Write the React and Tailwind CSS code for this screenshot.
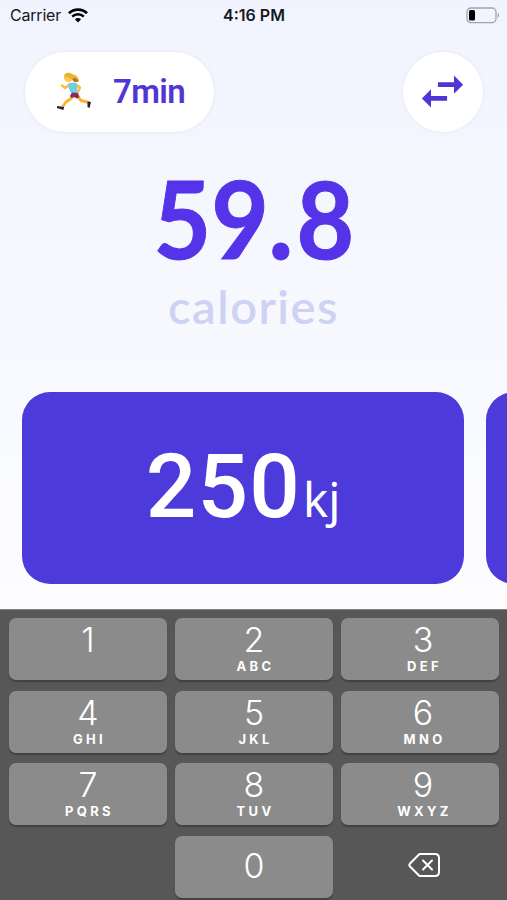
import React, { useState } from 'react';
import { MdSwapHoriz } from 'react-icons/md';

const keys = [
  { digit: '1', letters: '' },
  { digit: '2', letters: 'ABC' },
  { digit: '3', letters: 'DEF' },
  { digit: '4', letters: 'GHI' },
  { digit: '5', letters: 'JKL' },
  { digit: '6', letters: 'MNO' },
  { digit: '7', letters: 'PQRS' },
  { digit: '8', letters: 'TUV' },
  { digit: '9', letters: 'WXYZ' },
];

const WifiIcon = () => (
  <svg width="20" height="15" viewBox="0 0 20 15" fill="none">
    <path d="M1 5.2C6 .4 14 .4 19 5.2" stroke="#000" strokeWidth="2.7" />
    <path d="M4.2 8.6C7.4 5.5 12.6 5.5 15.8 8.6" stroke="#000" strokeWidth="2.5" />
    <path d="M6.9 11.2c1.8-1.7 4.4-1.7 6.2 0L10 14.4z" fill="#000" />
  </svg>
);

const BatteryIcon = () => (
  <svg width="34" height="17" viewBox="0 0 34 17" fill="none">
    <rect x="1" y="1" width="29" height="14.6" rx="4" stroke="#a3a4ab" strokeWidth="1.3" />
    <rect x="3" y="3" width="6" height="10.6" rx="1.6" fill="#000" />
    <path d="M31.6 5.8c2 .8 2 4.2 0 5z" fill="#a3a4ab" />
  </svg>
);

const Runner = () => (
  <svg width="36" height="40" viewBox="0 0 36 40" fill="none">
    <path d="M17 24C15 28 12 28 10 30L6.5 35" stroke="#f8b52f" strokeWidth="3" strokeLinejoin="round" />
    <path d="M21 24l4 4.500 8 2" stroke="#f8b52f" strokeWidth="3" strokeLinejoin="round" />
    <path d="M13.500 12.500l-4.500 3.500L6 13.500" stroke="#fbbd39" strokeWidth="2.400" strokeLinecap="round" strokeLinejoin="round" />
    <path d="M20 12.500l4 3-2 4.500" stroke="#fbbd39" strokeWidth="2.400" strokeLinecap="round" strokeLinejoin="round" />
    <path d="M12.500 11l7-.5 2 4-.5 7.500-5.500-.5-3-6z" fill="#72cde6" />
    <path d="M16 20.500l6 .5 1.500 4-2.500 1.500-3-1.500-2.500 1-1.500-2z" fill="#8b2860" />
    <ellipse cx="12.500" cy="5.500" rx="4.500" ry="4.500" fill="#fdc94b" />
    <path d="M8 4.500C8.500 0 14 0 16.500 2.500c3 0 6 2.500 6.500 6.500-2 2-5 1-6-1-2-1-4-2.500-5-3z" fill="#eeae32" />
    <path d="M17 6c3 0 4 1 5.500 3-2 2-5 1-6-1z" fill="#b87320" />
    <path d="M1 34l7 1-.5 3-6.500-2z" fill="#24212e" />
    <path d="M31.500 29.500l3.500.5-1.500 6-2-1z" fill="#24212e" />
  </svg>
);

const BackspaceIcon = () => (
  <svg width="32" height="26" viewBox="0 0 32 26" fill="none" stroke="#fff" strokeWidth="2" strokeLinejoin="round">
    <path d="M11.500 2H27q4 0 4 4v14q0 4-4 4H11.500L1.800 14.200q-1-1.200 0-2.400z" />
    <path d="M15 8.500l9 9M24 8.500l-9 9" strokeLinecap="round" />
  </svg>
);

const Key = ({ digit, letters, onPress }) => (
  <button
    onClick={() => onPress(digit)}
    className="flex h-[62px] flex-col items-center rounded-[7px] bg-[#8b8b8b] text-white shadow-[0_2px_1px_#424242] nth-[3n]:pl-[6px]"
  >
    <span className={`text-[34px] leading-[44px] font-[350] ${digit === '0' ? 'pt-2' : ''}`}>{digit}</span>
    {letters && (
      <span className="-mt-1 pl-[3px] text-[13px] leading-4 font-bold tracking-[3.3px]">{letters}</span>
    )}
  </button>
);

const App = () => {
  const [value, setValue] = useState('250');

  const [whole, decimal] = (Number(value) / 4.184).toFixed(1).split('.');

  const addDigit = (digit) => setValue((prev) => (prev + digit).slice(-4));
  const removeDigit = () => setValue((prev) => prev.slice(0, -1));

  return (
    <div className="flex h-[900px] w-[507px] flex-col overflow-hidden bg-linear-to-b from-[#f1f4fe] to-[#fdfdff] to-70% font-['Lato',sans-serif]">
      <div className="grid h-[30px] grid-cols-3 items-center pr-[7px] pl-2 font-['Inter',sans-serif] text-[16px] text-[#17181c]">
        <div className="flex items-center gap-[7px] pl-[2px]">
          <span className="tracking-[-0.2px]">Carrier</span>
          <WifiIcon />
        </div>
        <span className="text-center font-semibold">4:16 PM</span>
        <div className="flex justify-end">
          <BatteryIcon />
        </div>
      </div>

      <div className="flex items-center justify-between pt-[22px] pr-6 pl-[25px]">
        <button className="flex h-20 w-[189px] items-center rounded-full bg-white pb-[1px] pl-[31px] shadow-[0_0_3px_1px_#e9eaf8]">
          <Runner />
          <span className="ml-[21px] font-['Roboto',sans-serif] text-[33px] font-semibold tracking-[-0.6px] text-[#5135d5]">
            7min
          </span>
        </button>
        <button className="flex size-20 items-center justify-center rounded-full bg-white pr-[2px] pb-[2px] shadow-[0_0_3px_1px_#e9eaf8]">
          <MdSwapHoriz className="size-[55px] text-[#5135d5]" />
        </button>
      </div>

      <div className="flex flex-col items-center pt-[32px]">
        <span className="scale-x-[0.93] text-[107px] leading-[108px] font-bold text-[#5433e8] [-webkit-text-stroke:1px_#5433e8]">
          {whole}
          <span className="mr-[4px] font-black">.</span>
          {decimal}
        </span>
        <span className="mt-[4px] text-[47px] leading-[60px] font-semibold tracking-[1.5px] text-[#ced2f3]">calories</span>
      </div>

      <div className="mt-[56px] flex shrink-0 gap-[22px] pl-[22px]">
        <div className="flex h-[192px] w-[442px] shrink-0 items-baseline justify-center rounded-[28px] bg-[#4d3adb] pt-[42px] text-white">
          <span className="font-['Roboto',sans-serif] text-[89px] leading-[106px] font-medium tracking-[1.2px]">{value}</span>
          <span className="ml-[2px] font-['Noto_Sans',sans-serif] text-[47px] leading-[60px]">kj</span>
        </div>
        <div className="h-[192px] w-[442px] shrink-0 rounded-[28px] bg-[#4d3adb]" />
      </div>

      <div className="mt-auto grid h-[291px] shrink-0 grid-cols-3 content-start gap-x-2 gap-y-[10.6px] border-t border-[#818181] bg-[#575757] pt-2 pr-2 pl-[9px] font-['Inter',sans-serif]">
        {keys.map((key) => (
          <Key key={key.digit} digit={key.digit} letters={key.letters} onPress={addDigit} />
        ))}
        <div />
        <Key digit="0" onPress={addDigit} />
        <button onClick={removeDigit} className="flex items-center justify-center pb-1 pl-2">
          <BackspaceIcon />
        </button>
      </div>
    </div>
  );
};

export default App;
